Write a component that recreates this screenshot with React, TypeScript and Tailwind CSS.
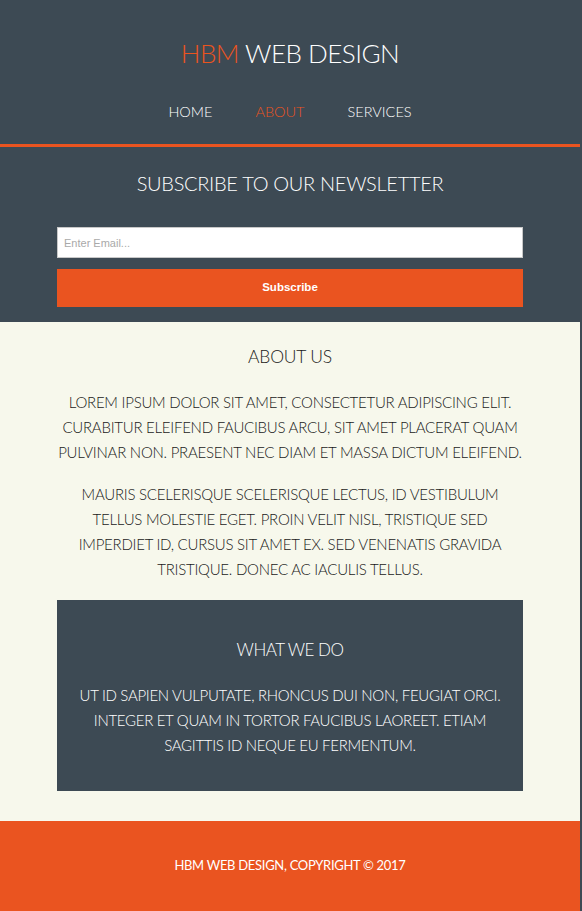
export default function App() {
  const font = { fontFamily: 'Lato, "Open Sans", sans-serif' };
  const arial = { fontFamily: '"Liberation Sans", Arial, sans-serif' };
  return (
    <div className="min-h-[911px] w-[582px] bg-[#3d4a54]" style={font}>
      <div className="w-[580px]">
        <header className="bg-[#3d4a54] text-white">
          <h1 className="pt-[33px] text-center text-[26px] font-light leading-[40px] tracking-[-0.5px]">
            <span className="text-[#ea5420]">HBM</span> WEB DESIGN
          </h1>
          <nav className="mt-[30px] flex justify-center gap-[43px] pb-[23px] text-[14.5px] font-light leading-[18px]">
            <a className="text-white">HOME</a>
            <a className="text-[#ea5420]">ABOUT</a>
            <a className="text-white">SERVICES</a>
          </nav>
          <div className="h-[3px] bg-[#ea5420]" />
        </header>

        <section className="bg-[#3d4a54] px-[57px] pb-[15px] pt-[22px]">
          <h2 className="text-center text-[20px] font-light leading-[28px] tracking-[-0.3px] text-white">
            SUBSCRIBE TO OUR NEWSLETTER
          </h2>
          <input
            className="mt-[30px] block h-[31px] w-full border border-[#c8c8c8] bg-white px-[6px] text-[11px] outline-none placeholder:text-[#a9a9a9]"
            style={arial}
            placeholder="Enter Email..."
          />
          <button
            className="mt-[11px] block h-[38px] w-full bg-[#ea5420] text-[11.5px] font-bold text-white"
            style={arial}
          >
            Subscribe
          </button>
        </section>

        <main className="bg-[#f7f8ec] px-[57px] pb-[30px] pt-[23px] text-[#1a1a1a]">
          <h2 className="text-center text-[17.5px] font-light leading-[24px] tracking-[-0.2px]">ABOUT US</h2>
          <p className="mt-[21px] whitespace-nowrap text-center text-[15px] font-light leading-[25px] tracking-[-0.25px]">
            LOREM IPSUM DOLOR SIT AMET, CONSECTETUR ADIPISCING ELIT.
            <br />
            CURABITUR ELEIFEND FAUCIBUS ARCU, SIT AMET PLACERAT QUAM
            <br />
            PULVINAR NON. PRAESENT NEC DIAM ET MASSA DICTUM ELEIFEND.
          </p>
          <p className="mt-[17px] whitespace-nowrap text-center text-[15px] font-light leading-[25px] tracking-[-0.25px]">
            MAURIS SCELERISQUE SCELERISQUE LECTUS, ID VESTIBULUM
            <br />
            TELLUS MOLESTIE EGET. PROIN VELIT NISL, TRISTIQUE SED
            <br />
            IMPERDIET ID, CURSUS SIT AMET EX. SED VENENATIS GRAVIDA
            <br />
            TRISTIQUE. DONEC AC IACULIS TELLUS.
          </p>

          <div className="mt-[18px] bg-[#3d4a54] pb-[33px] pt-[38px] text-white">
            <h3 className="text-center text-[17px] font-light leading-[24px] tracking-[-0.5px]">WHAT WE DO</h3>
            <p className="mt-[21px] whitespace-nowrap text-center text-[15px] font-light leading-[25px] tracking-[-0.3px]">
              UT ID SAPIEN VULPUTATE, RHONCUS DUI NON, FEUGIAT ORCI.
              <br />
              INTEGER ET QUAM IN TORTOR FAUCIBUS LAOREET. ETIAM
              <br />
              SAGITTIS ID NEQUE EU FERMENTUM.
            </p>
          </div>
        </main>

        <footer className="flex h-[90px] items-center justify-center bg-[#ea5420] text-[13px] tracking-[-0.3px] text-white">
          HBM WEB DESIGN, COPYRIGHT © 2017
        </footer>
      </div>
    </div>
  );
}
